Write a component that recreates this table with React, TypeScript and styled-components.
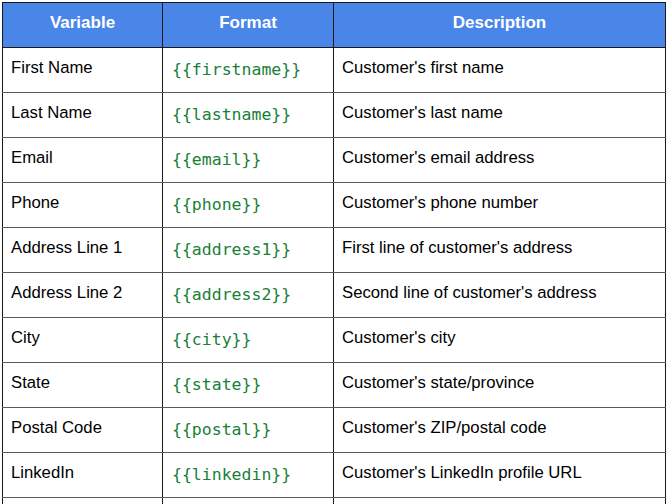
import React from "react";
import styled, { createGlobalStyle } from "styled-components";

const Global = createGlobalStyle`
  html, body { margin: 0; padding: 0; background: #ffffff; overflow: hidden; }
  body { font-family: "Liberation Sans", Arial, sans-serif; }
`;

const Page = styled.div`
  padding: 2px 0 0 2px;
  width: 670px;
  height: 504px;
  box-sizing: border-box;
  overflow: hidden;
`;

const Table = styled.table`
  border-collapse: collapse;
  table-layout: fixed;
  width: 663px;
  font-family: "Liberation Sans", Arial, sans-serif;
  font-size: 16.7px;
  color: #000;
`;

const HeadCell = styled.th`
  background: #4a86e8;
  color: #ffffff;
  font-weight: bold;
  font-size: 17px;
  text-align: center;
  vertical-align: top;
  height: 45px;
  box-sizing: border-box;
  padding: 10px 9px 0;
  border: 1px solid #1a1a1a;
  line-height: 19px;
`;

const Cell = styled.td<{ $mono?: boolean }>`
  vertical-align: top;
  height: 45px;
  box-sizing: border-box;
  padding: ${(p) => (p.$mono ? "13px 9px 0" : "10px 8px 0")};
  border-left: 1px solid #1a1a1a;
  border-right: 1px solid #1a1a1a;
  border-top: 1px solid #5a5a5a;
  border-bottom: 1px solid #5a5a5a;
  line-height: 19px;
  white-space: nowrap;
  ${(p) =>
    p.$mono
      ? `font-family: "DejaVu Sans Mono", "Liberation Mono", monospace;
         font-size: 16.5px;
         line-height: 18px;
         color: #188038;`
      : ""}
`;

const rows: [string, string, string][] = [
  ["First Name", "{{firstname}}", "Customer's first name"],
  ["Last Name", "{{lastname}}", "Customer's last name"],
  ["Email", "{{email}}", "Customer's email address"],
  ["Phone", "{{phone}}", "Customer's phone number"],
  ["Address Line 1", "{{address1}}", "First line of customer's address"],
  ["Address Line 2", "{{address2}}", "Second line of customer's address"],
  ["City", "{{city}}", "Customer's city"],
  ["State", "{{state}}", "Customer's state/province"],
  ["Postal Code", "{{postal}}", "Customer's ZIP/postal code"],
  ["LinkedIn", "{{linkedin}}", "Customer's LinkedIn profile URL"],
  ["", "", ""],
];

export default function App() {
  return (
    <Page>
      <Global />
      <Table>
        <colgroup>
          <col style={{ width: 160 }} />
          <col style={{ width: 171 }} />
          <col style={{ width: 332 }} />
        </colgroup>
        <thead>
          <tr>
            <HeadCell>Variable</HeadCell>
            <HeadCell>Format</HeadCell>
            <HeadCell>Description</HeadCell>
          </tr>
        </thead>
        <tbody>
          {rows.map(([v, f, d], i) => (
            <tr key={i}>
              <Cell>{v}</Cell>
              <Cell $mono>{f}</Cell>
              <Cell>{d}</Cell>
            </tr>
          ))}
        </tbody>
      </Table>
    </Page>
  );
}
